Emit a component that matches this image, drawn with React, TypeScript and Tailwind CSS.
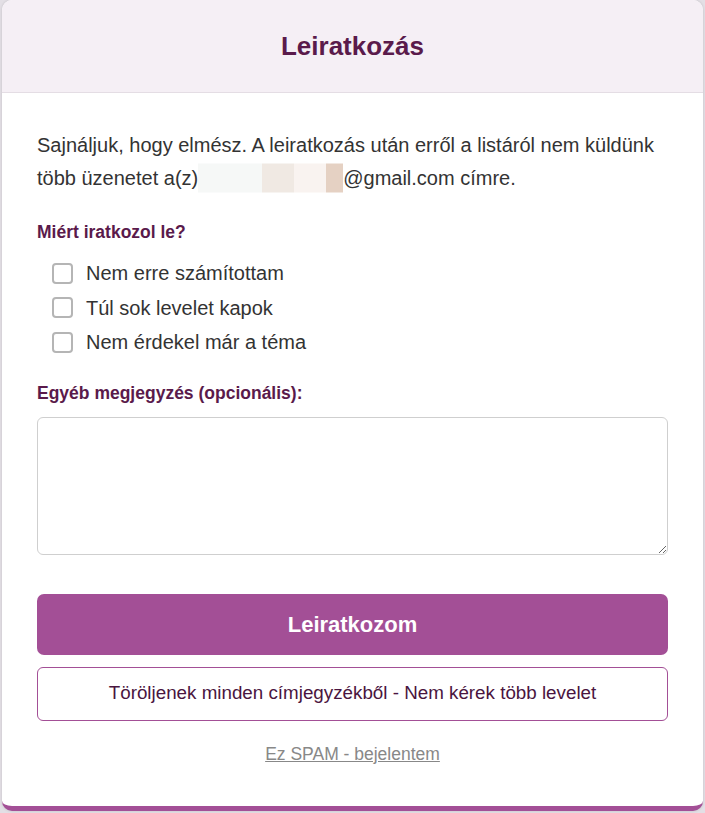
import React from "react";

const reasons = ["Nem erre számítottam", "Túl sok levelet kapok", "Nem érdekel már a téma"];

// blurred-out part of the address, as flat colour blocks
const blur = [
  { w: "w-[64px]", c: "bg-[#f6f8f7]" },
  { w: "w-[32px]", c: "bg-[#f0e9e3]" },
  { w: "w-[32px]", c: "bg-[#f9f3f0]" },
  { w: "w-[17px]", c: "bg-[#e5d1c3]" },
];

export default function App() {
  return (
    <div
      className="min-h-[813px] bg-[#e3dfe5] px-[2px] pb-[3px]"
      style={{ fontFamily: '"Liberation Sans", Arial, sans-serif' }}
    >
      <div className="overflow-hidden rounded-[10px] border-b-[5px] border-[#a34f96] bg-white shadow-[0_0_3px_rgba(0,0,0,0.15)]">
        <div className="flex h-[93px] items-center justify-center border-b border-[#e4dde4] bg-[#f5eff5]">
          <h1 className="text-[26px] font-bold text-[#5a1a4b]">Leiratkozás</h1>
        </div>

        <div className="px-[35px] pt-[36px] pb-[39px]">
          <p className="text-[20px] leading-[33px] text-[#333]">
            Sajnáljuk, hogy elmész. A leiratkozás után erről a listáról nem küldünk több üzenetet a(z)
            <span className="inline-flex h-[29px] translate-y-[1.5px] align-top">
              {blur.map((b, i) => (
                <span key={i} className={`${b.w} ${b.c} h-full`} />
              ))}
            </span>
            @gmail.com címre.
          </p>

          <h2 className="mt-[24px] text-[17.5px] font-bold text-[#5a1a4b]">Miért iratkozol le?</h2>
          <div className="mt-[17px] flex flex-col gap-[12.5px] pl-[15px]">
            {reasons.map((r) => (
              <label key={r} className="flex items-center gap-[13px] text-[20px] leading-[22px] text-[#333]">
                <span className="h-[21px] w-[21px] rounded-[4px] border-2 border-[#b5b5b5] bg-white" />
                {r}
              </label>
            ))}
          </div>

          <h2 className="mt-[27px] text-[17.5px] font-bold text-[#5a1a4b]">Egyéb megjegyzés (opcionális):</h2>
          <textarea className="mt-[10px] block h-[138px] w-full rounded-[6px] border border-[#cfcfcf] bg-white outline-none" />

          <button className="mt-[39px] flex h-[61px] w-full items-center justify-center rounded-[7px] bg-[#a34f96] text-[22px] font-bold text-white">
            Leiratkozom
          </button>
          <button className="mt-[12px] flex h-[54px] w-full items-center justify-center rounded-[6px] border border-[#a34f96] bg-white text-[18.8px] text-[#4a1540]">
            Töröljenek minden címjegyzékből - Nem kérek több levelet
          </button>

          <div className="mt-[20px] text-center">
            <a href="#" className="text-[17.5px] text-[#888] underline">
              Ez SPAM - bejelentem
            </a>
          </div>
        </div>
      </div>
    </div>
  );
}
